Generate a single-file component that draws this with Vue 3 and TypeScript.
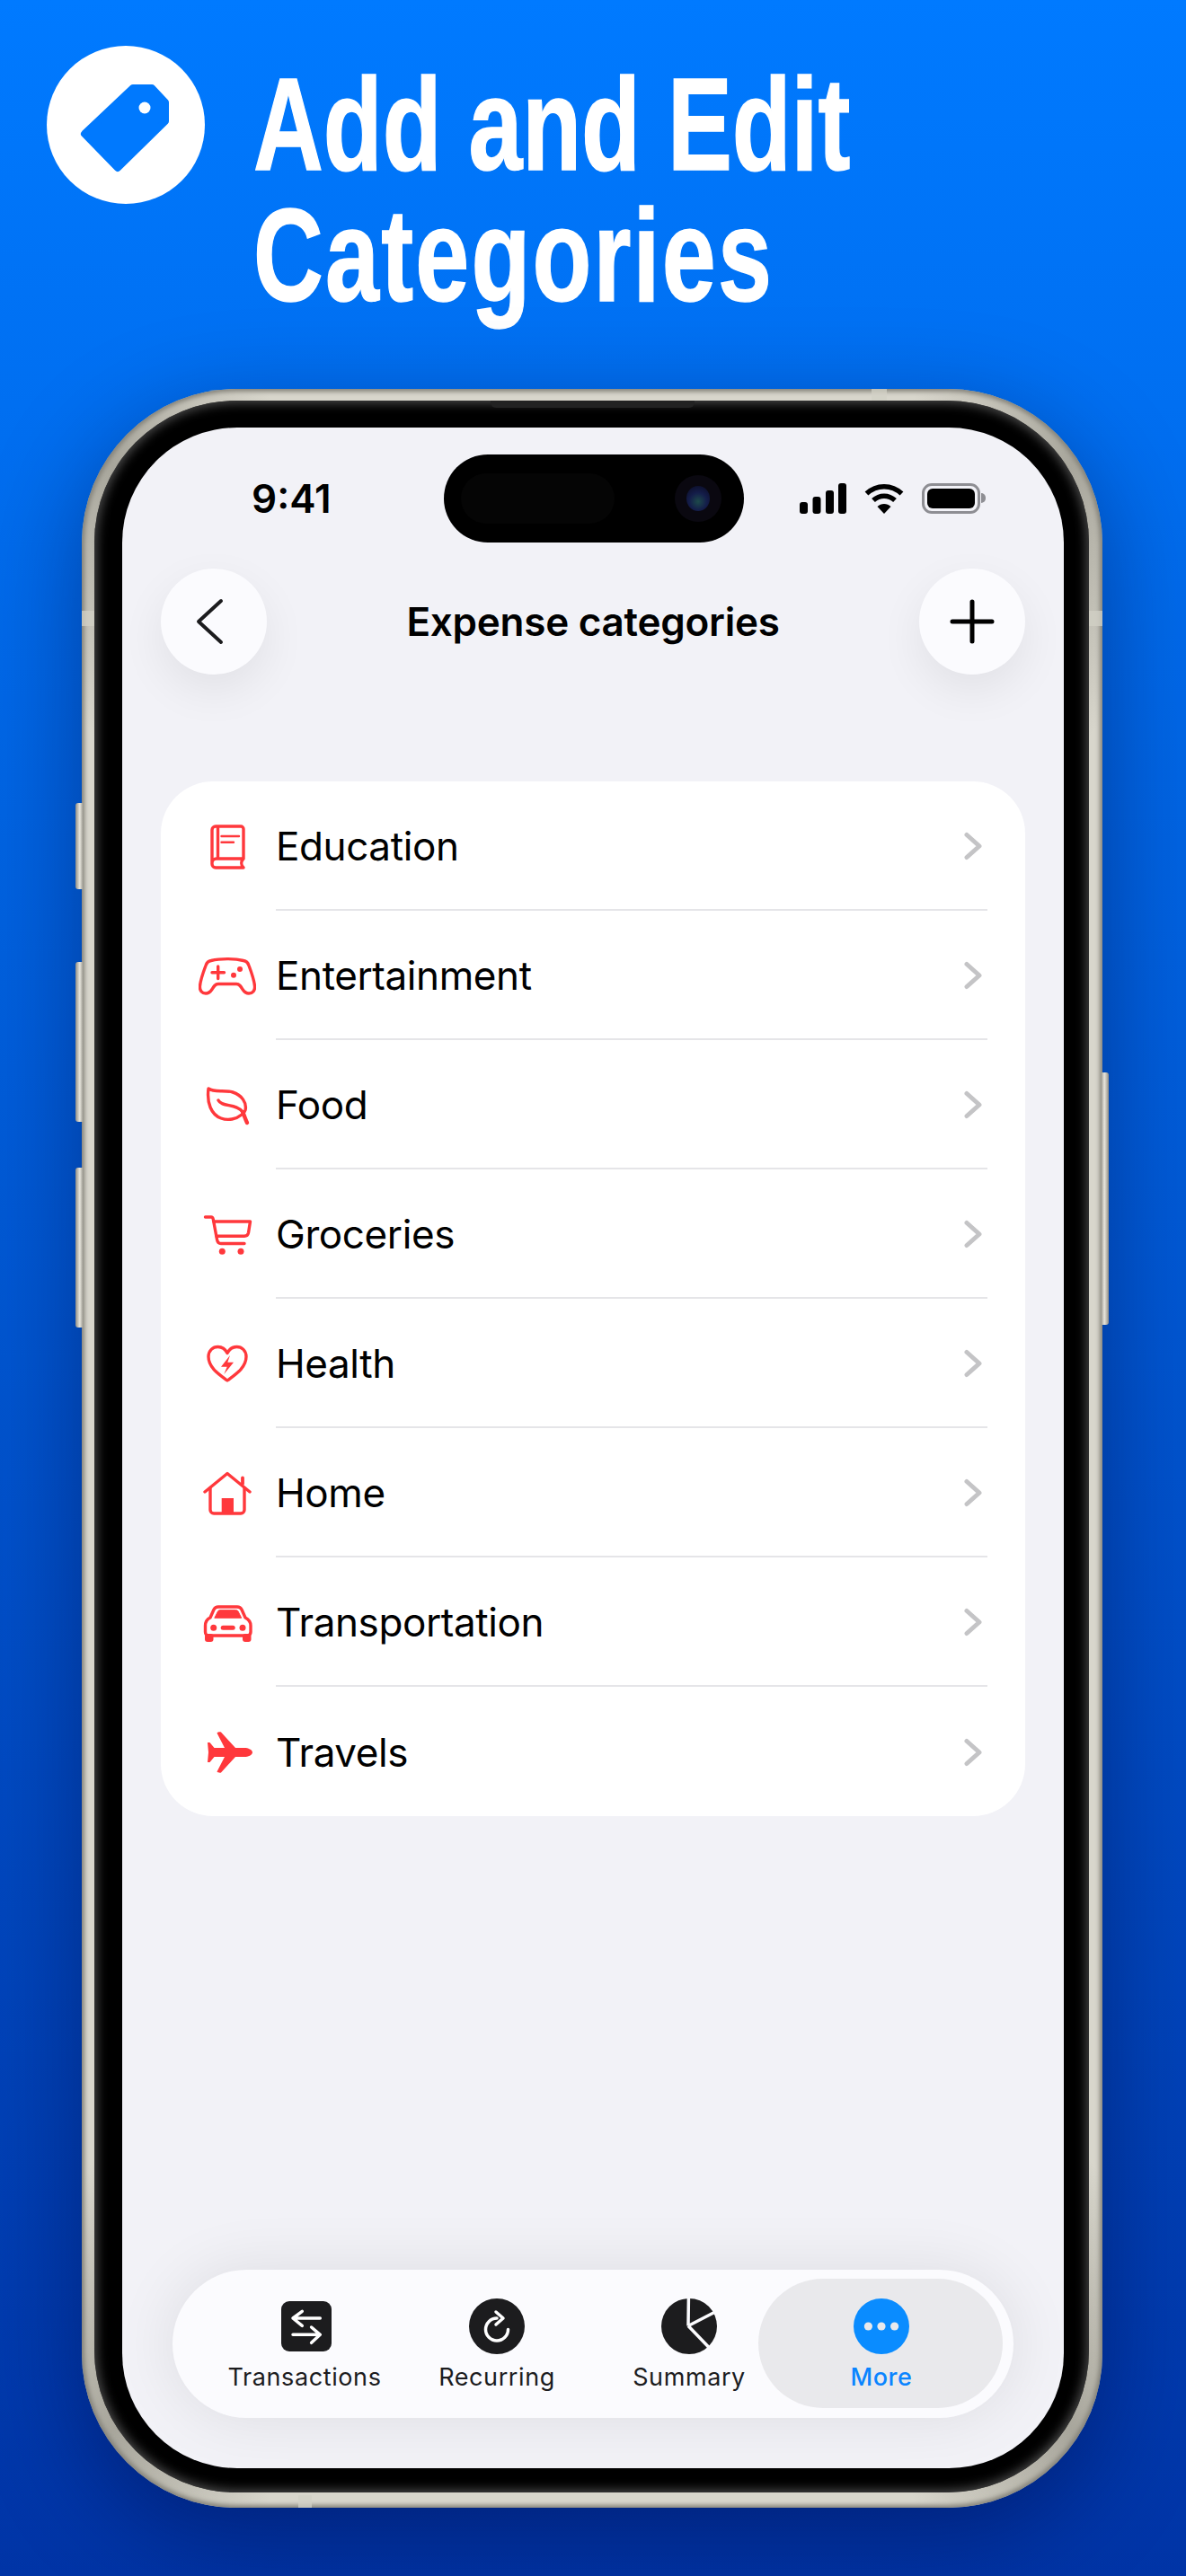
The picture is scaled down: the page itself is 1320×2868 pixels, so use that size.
<template>
  <div class="page">
    <header class="hero">
      <div class="hero-badge">
        <svg width="176" height="176" viewBox="0 0 176 176">
          <path
            d="M96 47 H117 L132 63 V84 L79 136 L42 98 Z"
            fill="#0079fe"
            stroke="#0079fe"
            stroke-width="8"
            stroke-linejoin="round"
          />
          <circle cx="109" cy="69" r="6.5" fill="#fff" />
        </svg>
      </div>
      <h1 class="hero-title">Add and Edit<br /><span class="hero-second">Categories</span></h1>
    </header>

    <div class="phone">
      <i class="side side-a"></i>
      <i class="side side-b"></i>
      <i class="side side-c"></i>
      <i class="side side-d"></i>
      <i class="band band-top"></i>
      <i class="band band-left"></i>
      <i class="band band-right"></i>
      <i class="band band-bottom"></i>

      <div class="bezel">
        <i class="speaker"></i>
        <main class="screen">
          <div class="island">
            <span class="island-pill"></span>
            <span class="camera"><span class="lens"></span></span>
          </div>

          <div class="status">
            <span class="time">9:41</span>
            <div class="status-icons">
              <svg width="52" height="34" viewBox="0 0 52 34" fill="#000">
                <rect x="0" y="21" width="9" height="13" rx="3" />
                <rect x="14.5" y="15" width="9" height="19" rx="3" />
                <rect x="29" y="8" width="9" height="26" rx="3" />
                <rect x="43" y="0" width="9" height="34" rx="3" />
              </svg>
              <svg width="44" height="34" viewBox="0 0 44 34" fill="none" stroke="#000" stroke-width="5.5">
                <path d="M2.5 11.5 C13.5 1 30.5 1 41.5 11.5" />
                <path d="M10 19 C17 12.500 27 12.500 34 19" />
                <path d="M22 34 L14.500 26 C18.500 22 25.500 22 29.500 26 Z" fill="#000" stroke="none" />
              </svg>
              <div class="battery">
                <span class="battery-body"><span class="battery-fill"></span></span>
                <span class="battery-nub"></span>
              </div>
            </div>
          </div>

          <nav class="nav">
            <button class="round-btn">
              <svg width="42" height="52" viewBox="0 0 42 52" fill="none" stroke="#1c1c1e" stroke-width="4" stroke-linecap="round" stroke-linejoin="round">
                <path d="M29 3 L4 26 L29 49" />
              </svg>
            </button>
            <span class="nav-title">Expense categories</span>
            <button class="round-btn">
              <svg width="52" height="52" viewBox="0 0 52 52" fill="none" stroke="#000" stroke-width="5" stroke-linecap="round">
                <path d="M26 4 V48 M4 26 H48" />
              </svg>
            </button>
          </nav>

          <section class="card">
            <div v-for="cat in categories" :key="cat.name" class="row">
              <svg class="row-icon" width="64" height="64" viewBox="0 0 64 64" fill="none" stroke="#ff383c" stroke-width="3.400" stroke-linecap="round" stroke-linejoin="round">
                <template v-if="cat.icon === 'book'">
                  <path d="M50 46 V13 a3 3 0 0 0 -3 -3 H19 a4 4 0 0 0 -4 4 V52 a4 4 0 0 0 4 4 H50 c-3 -3 -3 -7 0 -10 H20 a5 5 0 0 0 -5 5" />
                  <path d="M21.500 11 V45" />
                  <path d="M25.500 21 H45 M25.500 27.700 H39" stroke-width="2.400" />
                </template>
                <template v-else-if="cat.icon === 'game'">
                  <path d="M14 15.500 C24 13 40 13 50 15.500 C53 16 55 18 56 21 C59 29 62 37 62.500 44 C63 49 60 52 56 52 C53 52 51 50.500 49 47.500 C47 44 45.500 41.500 42 41.500 H22 C18.500 41.500 17 44 15 47.500 C13 50.500 11 52 8 52 C4 52 1 49 1.500 44 C2 37 5 29 8 21 C9 18 11 16 14 15.500 Z" />
                  <path d="M15 28.700 H28.500 M21.700 22 V35.500" />
                  <circle cx="39" cy="31.700" r="3" fill="#ff383c" stroke="none" />
                  <circle cx="46" cy="25" r="3" fill="#ff383c" stroke="none" />
                </template>
                <template v-else-if="cat.icon === 'leaf'">
                  <path d="M11 14 C18 19 28 15 38 18 C48 21 54 30 52 38 C51 41 50 42 48 43 C42 48 33 50 25 47 C14 43 9 30 11 14 Z" />
                  <path d="M22 27 C26 35 42 30 49 40" />
                  <path d="M49 40 C51 44 52 48 54 52" stroke-width="4.400" />
                </template>
                <template v-else-if="cat.icon === 'cart'">
                  <path d="M7.500 13 H14 C15.500 13 16 14 16.300 15.500 L20.500 38 C21 41 22.500 42.500 25 42.500 H51" />
                  <path d="M17 18 H57.500 L55.500 30.500 C55 33 53.500 34.300 51 34.300 H20" />
                  <circle cx="26.300" cy="51.300" r="3.500" fill="#ff383c" stroke="none" />
                  <circle cx="47" cy="51.300" r="3.500" fill="#ff383c" stroke="none" />
                </template>
                <template v-else-if="cat.icon === 'heart'">
                  <path d="M32 51 C24 45 11 37 11 24.500 C11 17.500 16 13.500 21.500 13.500 C26 13.500 30 16.500 32 20.500 C34 16.500 38 13.500 42.500 13.500 C48 13.500 53 17.500 53 24.500 C53 37 40 45 32 51 Z" />
                  <path d="M35 23 L25 35.700 H31.700 L28.300 44 L39 30.700 H32.300 Z" fill="#ff383c" stroke="none" />
                </template>
                <template v-else-if="cat.icon === 'home'">
                  <path d="M7 31 L32 10.500 L57 31" />
                  <path d="M49 22 V15.500" stroke-width="3.800" />
                  <path d="M13 27 V51 a4 4 0 0 0 4 4 H47 a4 4 0 0 0 4 -4 V27" />
                  <rect x="25.700" y="38" width="13.300" height="17" fill="#ff383c" stroke="none" />
                </template>
                <template v-else-if="cat.icon === 'car'">
                  <path d="M22 15 H43 C45 15 47 16 48 18 L52 27 C56 29 58 32 58 36 V43 C58 46 56 47 54 47 H11 C9 47 7.500 46 7.500 43 V36 C7.500 32 9 29 13 27 L17 18 C18 16 20 15 22 15 Z" />
                  <path d="M18 27 L21.500 20 C22 19 23 18.700 24 18.700 H41.500 C42.500 18.700 43.500 19 44 20 L47.500 27 Z" fill="#ff383c" stroke="#ff383c" stroke-width="1" />
                  <circle cx="16.700" cy="38.300" r="3.500" fill="#ff383c" stroke="none" />
                  <circle cx="49" cy="38.300" r="3.500" fill="#ff383c" stroke="none" />
                  <rect x="24.700" y="35.800" width="16" height="5" rx="2.500" fill="#ff383c" stroke="none" />
                  <rect x="7" y="45" width="9.500" height="9" rx="3" fill="#ff383c" stroke="none" />
                  <rect x="49" y="45" width="9.500" height="9" rx="3" fill="#ff383c" stroke="none" />
                </template>
                <template v-else>
                  <path d="M60 33 C60 30 55 28 51 28 H41 L25 10.500 C24 10 21 10.500 20.500 11.500 L29 28 H17.500 L12.500 22 H10 L11 33 L10 44 H12.500 L17.500 38 H29 L20.500 54.500 C21 55.500 24 56 25 55.500 L41 38 H51 C55 38 60 36 60 33 Z" fill="#ff383c" stroke="none" />
                </template>
              </svg>
              <div class="row-body">
                <span class="row-name">{{ cat.name }}</span>
                <svg class="chevron" width="22" height="32" viewBox="0 0 22 32" fill="none" stroke="#c4c4c6" stroke-width="5" stroke-linecap="round" stroke-linejoin="round">
                  <path d="M5 3.500 L19 16 L5 28.500" />
                </svg>
              </div>
            </div>
          </section>

          <footer class="tabs">
            <div class="tab">
              <svg class="tab-square" width="56" height="62" viewBox="0 -3 56 62" fill="none" stroke="#fff" stroke-width="3.500" stroke-linecap="round" stroke-linejoin="round">
                <rect x="0" y="0" width="56" height="56" rx="9" fill="#1c1c1e" stroke="none" />
                <path d="M43.300 19 H13 M23.300 11.300 L13 19 L23.300 27.300" />
                <path d="M13 37.300 H43.300 M33.600 29 L43.300 37.300 L33.600 46.300" />
              </svg>
              <span class="tab-label">Transactions</span>
            </div>
            <div class="tab">
              <svg width="62" height="62" viewBox="0 0 62 62" fill="none" stroke="#fff" stroke-width="3.500" stroke-linecap="round" stroke-linejoin="round">
                <circle cx="31" cy="31" r="31" fill="#1c1c1e" stroke="none" />
                <path d="M31 22 A12.500 12.500 0 1 0 43.500 34.500" />
                <path d="M30 15 L38 22 L30 29" />
              </svg>
              <span class="tab-label">Recurring</span>
            </div>
            <div class="tab">
              <svg width="62" height="62" viewBox="0 0 62 62" fill="none" stroke="#fbfbfe" stroke-width="3.500">
                <circle cx="31" cy="31" r="31" fill="#1c1c1e" stroke="none" />
                <path d="M30 30.500 L30.400 -1 M30 30.500 L59 15.500 M30 30.500 L53 54.500" />
              </svg>
              <span class="tab-label">Summary</span>
            </div>
            <div class="tab tab-active">
              <span class="tab-pill"></span>
              <svg class="tab-icon" width="62" height="62" viewBox="0 0 62 62" fill="#e9e9ec">
                <circle cx="31" cy="31" r="31" fill="#0a8cff" />
                <circle cx="16.400" cy="31" r="4.600" />
                <circle cx="31" cy="31" r="4.600" />
                <circle cx="45.600" cy="31" r="4.600" />
              </svg>
              <span class="tab-label tab-label-active">More</span>
            </div>
          </footer>
        </main>
      </div>
    </div>
  </div>
</template>

<script setup lang="ts">
interface Category {
  name: string
  icon: "book" | "game" | "leaf" | "cart" | "heart" | "home" | "car" | "plane"
}

const categories: Category[] = [
  { name: "Education", icon: "book" },
  { name: "Entertainment", icon: "game" },
  { name: "Food", icon: "leaf" },
  { name: "Groceries", icon: "cart" },
  { name: "Health", icon: "heart" },
  { name: "Home", icon: "home" },
  { name: "Transportation", icon: "car" },
  { name: "Travels", icon: "plane" },
]
</script>

<style>
html,
body {
  margin: 0;
  padding: 0;
}
</style>

<style scoped>
.page {
  width: 1320px;
  height: 2868px;
  overflow: hidden;
  background: linear-gradient(180deg, #007aff 0%, #0034a6 100%);
  font-family: Inter, "Liberation Sans", sans-serif;
}

.hero {
  height: 433px;
  box-sizing: border-box;
  padding: 51px 0 0 52px;
  display: flex;
  gap: 54px;
}

.hero-badge {
  width: 176px;
  height: 176px;
  border-radius: 50%;
  background: #fff;
  flex: none;
}

.hero-title {
  margin: 15px 0 0;
  font-family: "Liberation Sans", Arial, sans-serif;
  font-size: 146px;
  line-height: 146px;
  font-weight: 700;
  color: #fff;
  white-space: nowrap;
  transform: scaleX(0.738);
  transform-origin: left top;
  -webkit-text-stroke: 1.5px #fff;
}

.hero-second {
  letter-spacing: 3px;
}

.phone {
  position: relative;
  width: 1136px;
  height: 2359px;
  margin-left: 91px;
  box-sizing: border-box;
  padding: 13px 15px 17px 14px;
  border-radius: 172px;
  background: conic-gradient(
    #d8d6cc 0deg 17deg,
    #a8a69c 26deg,
    #d8d6cc 35deg 145deg,
    #a8a69c 154deg,
    #d8d6cc 163deg 197deg,
    #a8a69c 206deg,
    #d8d6cc 215deg 325deg,
    #a8a69c 334deg,
    #d8d6cc 343deg
  );
  box-shadow:
    inset 0 0 5px 3px #85837a,
    0 30px 110px rgba(0, 0, 50, 0.4);
}

.side {
  position: absolute;
  width: 8px;
  background: linear-gradient(90deg, #8f8d85, #e8e6dd 60%, #a5a39a);
  border-radius: 3px 0 0 3px;
}

.side-a {
  left: -7px;
  top: 461px;
  height: 96px;
}

.side-b {
  left: -7px;
  top: 638px;
  height: 178px;
}

.side-c {
  left: -7px;
  top: 867px;
  height: 178px;
}

.side-d {
  right: -7px;
  top: 761px;
  height: 281px;
  border-radius: 0 3px 3px 0;
  background: linear-gradient(270deg, #8f8d85, #e8e6dd 60%, #a5a39a);
}

.band {
  position: absolute;
  background: rgba(210, 208, 198, 0.75);
}

.band-top {
  left: 879px;
  top: 0;
  width: 17px;
  height: 13px;
}

.band-left {
  left: 0;
  top: 247px;
  width: 14px;
  height: 17px;
}

.band-right {
  right: 0;
  top: 247px;
  width: 15px;
  height: 17px;
}

.band-bottom {
  left: 241px;
  bottom: 0;
  width: 15px;
  height: 14px;
}

.bezel {
  position: relative;
  height: 100%;
  box-sizing: border-box;
  padding: 30px 28px 27px 31px;
  border-radius: 158px;
  background: #000;
  box-shadow: inset 0 0 12px 3px #4a4a4a;
}

.speaker {
  position: absolute;
  left: 441px;
  top: 0;
  width: 227px;
  height: 8px;
  border-radius: 0 0 6px 6px;
  background: #222;
}

.screen {
  position: relative;
  height: 100%;
  display: flex;
  flex-direction: column;
  border-radius: 128px;
  background: #f2f2f7;
  overflow: hidden;
}

.island {
  position: absolute;
  left: 357.5px;
  top: 30px;
  width: 334px;
  height: 98px;
  border-radius: 49px;
  background: #000;
}

.island-pill {
  position: absolute;
  left: 19px;
  top: 21px;
  width: 171px;
  height: 56px;
  border-radius: 28px;
  background: #050505;
}

.camera {
  position: absolute;
  left: 257px;
  top: 23px;
  width: 52px;
  height: 52px;
  border-radius: 50%;
  background: #0a0810;
  display: flex;
  align-items: center;
  justify-content: center;
}

.lens {
  width: 26px;
  height: 28px;
  border-radius: 50%;
  background: radial-gradient(circle at 50% 62%, #1d4a4a 0, #141d4a 45%, #0a0a20 100%);
}

.status {
  height: 157px;
  flex: none;
  box-sizing: border-box;
  padding: 0 87px 0 144px;
  display: flex;
  align-items: center;
  justify-content: space-between;
}

.time {
  font-size: 44px;
  font-weight: 600;
  color: #000;
}

.status-icons {
  display: flex;
  align-items: center;
  gap: 20px;
}

.battery {
  display: flex;
  align-items: center;
  gap: 1px;
}

.battery-body {
  width: 65px;
  height: 34px;
  box-sizing: border-box;
  border: 3px solid #8e8e93;
  border-radius: 11px;
  padding: 3px;
  display: block;
}

.battery-fill {
  display: block;
  height: 100%;
  border-radius: 6px;
  background: #000;
}

.battery-nub {
  width: 5px;
  height: 11px;
  border-radius: 0 5px 5px 0;
  background: #8e8e93;
}

.nav {
  flex: none;
  margin: 0 43px;
  display: flex;
  align-items: center;
  justify-content: space-between;
}

.round-btn {
  width: 118px;
  height: 118px;
  padding: 0;
  border: none;
  border-radius: 50%;
  background: #fbfbfe;
  box-shadow: 0 18px 50px rgba(0, 0, 0, 0.07);
  display: flex;
  align-items: center;
  justify-content: center;
}

.nav-title {
  font-size: 44px;
  font-weight: 600;
  letter-spacing: -0.25px;
  color: #000;
}

.card {
  flex: none;
  margin: 119px 43px 0;
  border-radius: 58px;
  background: #fff;
  padding-left: 42px;
}

.row {
  height: 144px;
  display: flex;
  align-items: center;
  gap: 22px;
}

.row-icon {
  flex: none;
}

.row-body {
  flex: 1;
  height: 100%;
  box-sizing: border-box;
  margin-right: 42px;
  padding-top: 2px;
  display: flex;
  align-items: center;
  justify-content: space-between;
  border-bottom: 2px solid #e5e5e8;
}

.row:last-child .row-body {
  border-bottom: none;
}

.row-name {
  font-size: 44px;
  font-weight: 400;
  letter-spacing: -0.4px;
  color: #000;
}

.chevron {
  margin-right: 6px;
}

.tabs {
  flex: none;
  margin: auto 56px 56px;
  height: 165px;
  box-sizing: border-box;
  padding: 32px 40px 0;
  border-radius: 83px;
  background: #fbfbfe;
  box-shadow: 0 0 70px rgba(0, 0, 0, 0.09);
  display: grid;
  grid-template-columns: repeat(4, 1fr);
}

.tab {
  position: relative;
  display: flex;
  flex-direction: column;
  align-items: center;
  gap: 9px;
}

.tab-square {
  margin-left: 3px;
}

.tab-pill {
  position: absolute;
  left: -30px;
  right: -28px;
  top: -22px;
  height: 144px;
  border-radius: 72px;
  background: #e9e9ec;
}

.tab-icon {
  position: relative;
}

.tab-label {
  position: relative;
  font-size: 27px;
  font-weight: 400;
  line-height: 33px;
  letter-spacing: 0.6px;
  color: #1c1c1e;
}

.tab-label-active {
  color: #0a84ff;
  font-weight: 500;
}
</style>
